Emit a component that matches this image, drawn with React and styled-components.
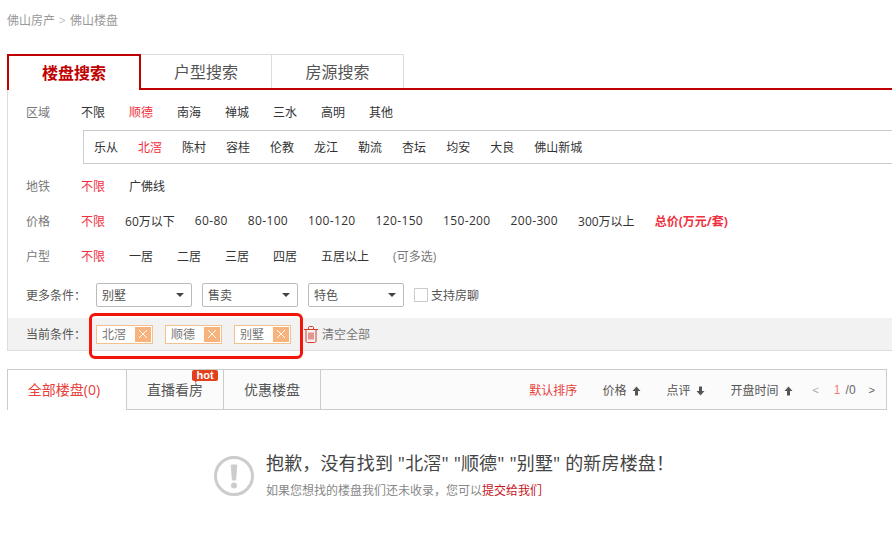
import styled, { createGlobalStyle } from "styled-components";

const GlobalStyle = createGlobalStyle`
  html, body {
    margin: 0;
    padding: 0;
    background: #fff;
    overflow: hidden;
  }
  body {
    font-family: "Open Sans", "Noto Sans CJK SC", sans-serif;
    font-size: 12px;
    color: #333;
  }
`;

const Page = styled.div`
  position: relative;
  width: 892px;
  height: 536px;
  overflow: hidden;
  padding-left: 7px;
  box-sizing: border-box;
`;

const Breadcrumb = styled.div`
  display: flex;
  gap: 4px;
  height: 54px;
  padding-top: 12px;
  box-sizing: border-box;
  line-height: 17px;
  color: #999;
`;

const Crumb = styled.span`
  color: ${(p) => (p.$sep ? "#bbb" : "#999")};
`;

const TabStrip = styled.div`
  display: flex;
  width: 885px;
  height: 36px;
  box-sizing: border-box;
  border-bottom: 2px solid #c00000;
`;

const SearchTab = styled.div`
  width: ${(p) => p.$width}px;
  height: ${(p) => (p.$active ? 36 : 34)}px;
  box-sizing: border-box;
  text-align: center;
  font-size: 16px;
  line-height: 34px;
  background: #fff;
  color: ${(p) => (p.$active ? "#c00000" : "#555")};
  font-weight: ${(p) => (p.$active ? 700 : 400)};
  border-top: ${(p) => (p.$active ? "2px solid #c00000" : "1px solid #ddd")};
  border-right: ${(p) => (p.$active ? "2px solid #c00000" : "1px solid #ddd")};
  border-left: ${(p) => (p.$active ? "2px solid #c00000" : "none")};
`;

const Panel = styled.div`
  width: 1200px;
  padding-top: 4px;
  border-left: 1px solid #ddd;
  border-bottom: 1px solid #ddd;
`;

const Row = styled.div`
  display: flex;
  align-items: center;
  height: 35px;
  padding-left: 18px;
`;

const Label = styled.span`
  width: 55px;
  color: #777;
  flex: none;
`;

const Options = styled.div`
  display: flex;
  gap: ${(p) => p.$gap || 24}px;
`;

const Option = styled.span`
  color: ${(p) => (p.$active ? "#f03040" : "#333")};
  font-weight: ${(p) => (p.$strong ? 700 : 400)};
  letter-spacing: ${(p) => (p.$num ? "0.35px" : "normal")};
`;

const Hint = styled.span`
  color: #777;
`;

const SubBox = styled.div`
  display: flex;
  align-items: center;
  gap: 20px;
  height: 34px;
  margin: 1px 0 4px 75px;
  padding-left: 10px;
  box-sizing: border-box;
  border: 1px solid #ccc;
`;

const MoreRow = styled.div`
  display: flex;
  align-items: center;
  height: 24px;
  margin: 10px 0 11px;
  padding-left: 18px;
`;

const MoreLabel = styled.span`
  width: 70px;
  color: #555;
  flex: none;
`;

const Selects = styled.div`
  display: flex;
  gap: 10px;
`;

const Select = styled.div`
  display: flex;
  align-items: center;
  justify-content: space-between;
  width: 96px;
  height: 24px;
  padding: 0 5px;
  box-sizing: border-box;
  border: 1px solid #bbb;
  border-radius: 2px;
  color: #555;
`;

const Caret = styled.i`
  width: 0;
  height: 0;
  margin-right: 2px;
  border-left: 4px solid transparent;
  border-right: 4px solid transparent;
  border-top: 4px solid #444;
`;

const CheckLabel = styled.label`
  display: flex;
  align-items: center;
  gap: 3px;
  margin-left: 10px;
  color: #555;
`;

const CheckBox = styled.i`
  width: 14px;
  height: 14px;
  box-sizing: border-box;
  border: 1px solid #ccc;
`;

const ConditionBar = styled.div`
  display: flex;
  align-items: center;
  height: 32px;
  padding-left: 18px;
  background: #f2f2f2;
`;

const Tags = styled.div`
  display: flex;
  gap: 12px;
`;

const Tag = styled.div`
  display: flex;
  align-items: center;
  justify-content: space-between;
  width: 57px;
  height: 19px;
  padding: 0 1px 0 5px;
  box-sizing: border-box;
  border: 1px solid #f3c08f;
  background: #fff;
  color: #777;
`;

const TagClose = styled.span`
  display: flex;
  align-items: center;
  justify-content: center;
  width: 16px;
  height: 15px;
  background: #f8b27c;
`;

const ClearAll = styled.div`
  display: flex;
  align-items: center;
  gap: 4px;
  margin-left: 13px;
  color: #777;
`;

const Highlight = styled.div`
  position: absolute;
  left: 89px;
  top: 313px;
  width: 214px;
  height: 46px;
  box-sizing: border-box;
  border: 3px solid #f3140a;
  border-radius: 6px;
`;

const ListBar = styled.div`
  display: flex;
  justify-content: space-between;
  width: 880px;
  height: 41px;
  margin-top: 18px;
  box-sizing: border-box;
  border: 1px solid #ccc;
  background: #fbfbfb;
`;

const ListTabs = styled.div`
  display: flex;
`;

const ListTab = styled.div`
  position: relative;
  width: ${(p) => p.$width}px;
  height: ${(p) => (p.$active ? 40 : 39)}px;
  padding-right: ${(p) => (p.$active ? 6 : 0)}px;
  box-sizing: border-box;
  border-right: 1px solid #ccc;
  background: ${(p) => (p.$active ? "#fff" : "#fbfbfb")};
  color: ${(p) => (p.$active ? "#e8403a" : "#555")};
  font-size: 14px;
  line-height: 40px;
  text-align: center;
`;

const HotBadge = styled.span`
  position: absolute;
  left: 65px;
  top: 0;
  width: 26px;
  height: 11px;
  border-radius: 2px;
  background: #e2401c;
  color: #fff;
  font-family: "Liberation Sans", sans-serif;
  font-size: 11px;
  font-weight: 700;
  line-height: 11px;
  &::after {
    content: "";
    position: absolute;
    left: 3px;
    top: 10px;
    border-left: 3px solid #e2401c;
    border-bottom: 3px solid transparent;
  }
`;

const SortBar = styled.div`
  display: flex;
  align-items: center;
  padding-right: 11px;
`;

const SortItem = styled.span`
  display: flex;
  align-items: center;
  gap: 6px;
  margin-right: 25px;
  color: ${(p) => (p.$active ? "#e8403a" : "#555")};
  svg {
    margin-top: 2px;
  }
  &:nth-child(4) {
    margin-right: 19px;
  }
`;

const Pager = styled.div`
  display: flex;
  align-items: center;
  color: #555;
`;

const PagerArrow = styled.span`
  font-family: "Liberation Sans", sans-serif;
  font-size: 11px;
  color: ${(p) => (p.$muted ? "#aaa" : "#666")};
`;

const PagerNum = styled.span`
  margin: 0 ${(p) => p.$right}px 0 ${(p) => p.$left}px;
  color: ${(p) => (p.$active ? "#f08080" : "#666")};
  font-family: "Liberation Sans", sans-serif;
  font-size: 12px;
`;

const Empty = styled.div`
  display: flex;
  align-items: flex-start;
  gap: 12px;
  margin-top: 40px;
  padding-left: 207px;
`;

const EmptyIcon = styled.svg`
  flex: none;
  margin-top: 6px;
`;

const EmptyTitle = styled.div`
  font-size: 18px;
  line-height: 26px;
  letter-spacing: 0.15px;
  color: #444;
`;

const EmptyText = styled.div`
  margin-top: 6px;
  line-height: 17px;
  color: #888;
`;

const EmptyLink = styled.span`
  color: #c4161c;
`;

const Cross = () => (
  <svg width="10" height="10" viewBox="0 0 10 10">
    <path d="M1 1L9 9M9 1L1 9" stroke="#fff" strokeWidth="1" fill="none" />
  </svg>
);

const Trash = () => (
  <svg width="14" height="17" viewBox="0 0 14 17" fill="none" stroke="#d8392f" strokeWidth="1">
    <path d="M0 3.5H14M4.5 3.5V1.5C4.5 1 5 .5 5.5 .5H8.5C9 .5 9.5 1 9.5 1.5V3.5" />
    <path d="M2 3.5V15C2 15.8 2.6 16.5 3.5 16.5H10.5C11.4 16.5 12 15.8 12 15V3.5" />
    <path d="M5 6.5V13.5M7 6.5V13.5M9 6.5V13.5" />
  </svg>
);

const Arrow = ({ down }) => (
  <svg width="9" height="10" viewBox="0 0 9 10" style={{ transform: down ? "rotate(180deg)" : "none" }}>
    <path d="M4.5 0.5L8.5 5H6V9.5H3V5H0.5Z" fill="#555" />
  </svg>
);

const WarnIcon = () => (
  <EmptyIcon width="40" height="40" viewBox="0 0 40 40">
    <circle cx="20" cy="20" r="18.5" fill="none" stroke="#ccc" strokeWidth="3" />
    <path d="M17.2 9H22.8L21.6 24H18.4Z" fill="#ccc" strokeLinejoin="round" stroke="#ccc" />
    <circle cx="20" cy="29.5" r="3" fill="#ccc" />
  </EmptyIcon>
);

const areas = ["南海", "禅城", "三水", "高明", "其他"];
const towns = ["陈村", "容桂", "伦教", "龙江", "勒流", "杏坛", "均安", "大良", "佛山新城"];
const prices = ["60-80", "80-100", "100-120", "120-150", "150-200", "200-300"];
const layouts = ["一居", "二居", "三居", "四居", "五居以上"];

export default function App() {
  return (
    <>
      <GlobalStyle />
      <Page>
        <Breadcrumb>
          <Crumb>佛山房产</Crumb>
          <Crumb $sep>&gt;</Crumb>
          <Crumb>佛山楼盘</Crumb>
        </Breadcrumb>

        <TabStrip>
          <SearchTab $width={134} $active>楼盘搜索</SearchTab>
          <SearchTab $width={131}>户型搜索</SearchTab>
          <SearchTab $width={132}>房源搜索</SearchTab>
        </TabStrip>

        <Panel>
          <Row>
            <Label>区域</Label>
            <Options>
              <Option>不限</Option>
              <Option $active>顺德</Option>
              {areas.map((a) => <Option key={a}>{a}</Option>)}
            </Options>
          </Row>
          <SubBox>
            <Option>乐从</Option>
            <Option $active>北滘</Option>
            {towns.map((t) => <Option key={t}>{t}</Option>)}
          </SubBox>
          <Row>
            <Label>地铁</Label>
            <Options>
              <Option $active>不限</Option>
              <Option>广佛线</Option>
            </Options>
          </Row>
          <Row>
            <Label>价格</Label>
            <Options $gap={20}>
              <Option $active>不限</Option>
              <Option>60万以下</Option>
              {prices.map((p) => <Option key={p} $num>{p}</Option>)}
              <Option>300万以上</Option>
              <Option $active $strong>总价(万元/套)</Option>
            </Options>
          </Row>
          <Row>
            <Label>户型</Label>
            <Options>
              <Option $active>不限</Option>
              {layouts.map((l) => <Option key={l}>{l}</Option>)}
              <Hint>(可多选)</Hint>
            </Options>
          </Row>
          <MoreRow>
            <MoreLabel>更多条件：</MoreLabel>
            <Selects>
              <Select>别墅<Caret /></Select>
              <Select>售卖<Caret /></Select>
              <Select>特色<Caret /></Select>
            </Selects>
            <CheckLabel><CheckBox />支持房聊</CheckLabel>
          </MoreRow>
          <ConditionBar>
            <MoreLabel>当前条件：</MoreLabel>
            <Tags>
              <Tag>北滘<TagClose><Cross /></TagClose></Tag>
              <Tag>顺德<TagClose><Cross /></TagClose></Tag>
              <Tag>别墅<TagClose><Cross /></TagClose></Tag>
            </Tags>
            <ClearAll><Trash />清空全部</ClearAll>
          </ConditionBar>
        </Panel>

        <ListBar>
          <ListTabs>
            <ListTab $width={119} $active>全部楼盘(0)</ListTab>
            <ListTab $width={97}>直播看房<HotBadge>hot</HotBadge></ListTab>
            <ListTab $width={97}>优惠楼盘</ListTab>
          </ListTabs>
          <SortBar>
            <SortItem $active>默认排序</SortItem>
            <SortItem>价格<Arrow /></SortItem>
            <SortItem>点评<Arrow down /></SortItem>
            <SortItem>开盘时间<Arrow /></SortItem>
            <Pager>
              <PagerArrow $muted>&lt;</PagerArrow>
              <PagerNum $active $left={15} $right={5}>1</PagerNum>
              <PagerNum $left={0} $right={13}>/0</PagerNum>
              <PagerArrow>&gt;</PagerArrow>
            </Pager>
          </SortBar>
        </ListBar>

        <Empty>
          <WarnIcon />
          <div>
            <EmptyTitle>抱歉，没有找到 "北滘" "顺德" "别墅" 的新房楼盘！</EmptyTitle>
            <EmptyText>如果您想找的楼盘我们还未收录，您可以<EmptyLink>提交给我们</EmptyLink></EmptyText>
          </div>
        </Empty>

        <Highlight />
      </Page>
    </>
  );
}
